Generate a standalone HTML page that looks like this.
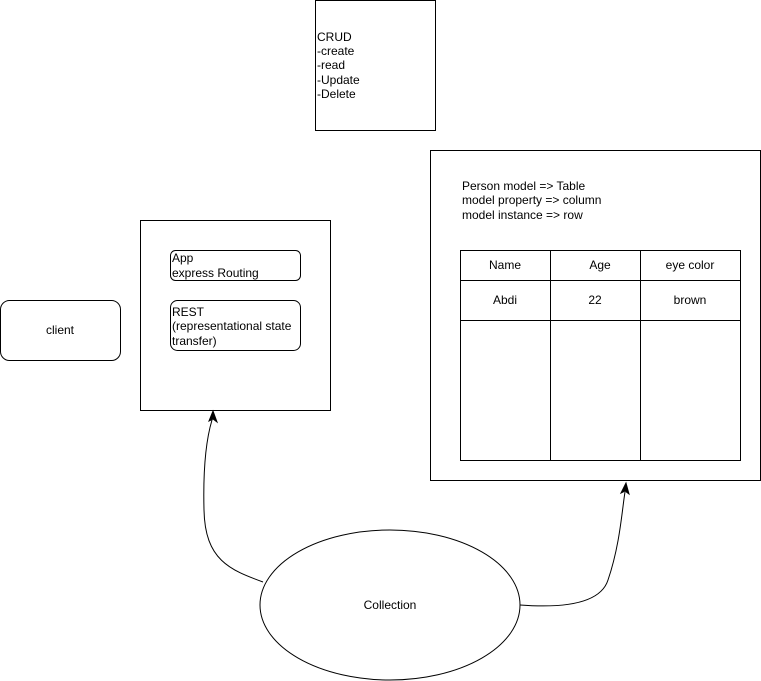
<!DOCTYPE html>
<html><head><meta charset="utf-8"><style>
html,body{margin:0;padding:0;background:#fff;}
svg{display:block;}
text{font-family:"Liberation Sans",Arial,sans-serif;font-size:12px;fill:#000;}
</style></head><body>
<svg width="761" height="681" viewBox="0 0 761 681" xmlns="http://www.w3.org/2000/svg">
<g fill="none" stroke="#000" stroke-width="1">
<rect x="315.5" y="0.5" width="120" height="130"/>
<rect x="430.5" y="150.5" width="330" height="330"/>
<rect x="460.5" y="250.5" width="280" height="210"/>
<line x1="550.5" y1="250" x2="550.5" y2="460"/>
<line x1="640.5" y1="250" x2="640.5" y2="460"/>
<line x1="460" y1="280.5" x2="740" y2="280.5"/>
<line x1="460" y1="320.5" x2="740" y2="320.5"/>
<rect x="140.5" y="220.5" width="190" height="190"/>
<rect x="170.5" y="250.5" width="130" height="30" rx="5"/>
<rect x="170.5" y="300.5" width="130" height="50" rx="7"/>
<rect x="0.5" y="300.5" width="120" height="60" rx="9"/>
<ellipse cx="390" cy="605" rx="130" ry="75"/>
<path d="M263 582 C 230 570 205 560 204 510 C 203 470 206 440 212 420"/>
<path d="M520 605 C 560 608 600 605 608 580 C 620 545 622 510 625 492"/>
</g>
<path d="M213 411 L209 421 L213 419 L217 422 Z" fill="#000" stroke="#000"/>
<path d="M626 483 L621 493 L625 491 L629 494 Z" fill="#000" stroke="#000"/>
<text x="317" y="41">CRUD</text>
<text x="317" y="55">-create</text>
<text x="317" y="69">-read</text>
<text x="317" y="84">-Update</text>
<text x="317" y="98">-Delete</text>
<text x="462" y="190">Person model =&gt; Table</text>
<text x="462" y="204">model property =&gt; column</text>
<text x="462" y="219">model instance =&gt; row</text>
<text x="505" y="269" text-anchor="middle">Name</text>
<text x="600" y="269" text-anchor="middle">Age</text>
<text x="690" y="269" text-anchor="middle">eye color</text>
<text x="505" y="304" text-anchor="middle">Abdi</text>
<text x="595" y="304" text-anchor="middle">22</text>
<text x="690" y="304" text-anchor="middle">brown</text>
<text x="172" y="262">App</text>
<text x="172" y="277">express Routing</text>
<text x="172" y="316">REST</text>
<text x="172" y="330">(representational state</text>
<text x="172" y="345">transfer)</text>
<text x="60" y="334" text-anchor="middle">client</text>
<text x="390" y="609" text-anchor="middle">Collection</text>
</svg>
</body></html>
